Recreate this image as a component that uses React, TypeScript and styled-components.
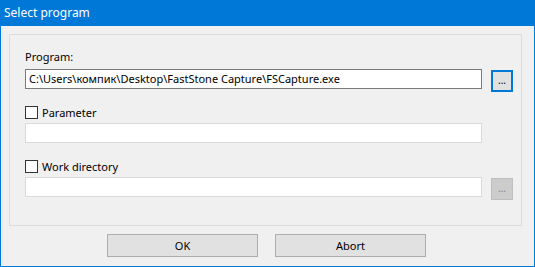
import styled, { createGlobalStyle } from 'styled-components';

const Global = createGlobalStyle`
    html, body {
        margin: 0;
        padding: 0;
        background: #f0f0f0;
    }
    * {
        box-sizing: border-box;
    }
`;

const Window = styled.div`
    display: flex;
    flex-direction: column;
    width: 535px;
    height: 267px;
    font-family: "Noto Sans", "Open Sans", sans-serif;
    font-size: 11px;
    color: #000;
    background: #f0f0f0;
`;

const TitleBar = styled.div`
    display: flex;
    align-items: center;
    height: 26px;
    padding-left: 4px;
    padding-bottom: 1px;
    background: #0078d7;
    color: #fff;
    font-size: 12px;
`;

const Body = styled.div`
    flex: 1;
    display: flex;
    flex-direction: column;
    border: 1px solid #0078d7;
    border-top: none;
    padding: 8px 12px 0 8px;
`;

const Group = styled.div`
    display: flex;
    flex-direction: column;
    height: 192px;
    border: 1px solid #dcdcdc;
    padding: 14px 0 0 15px;
`;

const Label = styled.div`
    height: 16px;
    line-height: 16px;
    margin-bottom: 4px;
`;

const Row = styled.div`
    display: flex;
    align-items: flex-start;
    gap: 9px;
    height: 20px;
`;

const Field = styled.div<{ $active?: boolean }>`
    width: 457px;
    height: 20px;
    background: #fff;
    border: 1px solid ${p => (p.$active ? '#7a7a7a' : '#d9d9d9')};
    padding: 0 3px;
    line-height: 18px;
    white-space: nowrap;
    overflow: hidden;
`;

const Browse = styled.div<{ $disabled?: boolean }>`
    display: flex;
    align-items: center;
    justify-content: center;
    flex-shrink: 0;
    width: 22px;
    height: 22px;
    margin-top: 1px;
    background: ${p => (p.$disabled ? '#cccccc' : '#e1e1e1')};
    border: ${p => (p.$disabled ? '1px solid #bfbfbf' : '2px solid #0078d7')};
    color: ${p => (p.$disabled ? '#838383' : '#000')};
    font-size: 10px;
    line-height: 1;
    padding-bottom: 2px;
`;

const Check = styled.label`
    display: flex;
    align-items: center;
    gap: 4px;
    height: 16px;
    margin-top: 15px;
    margin-bottom: 3px;
`;

const Box = styled.span`
    width: 13px;
    height: 13px;
    border: 1px solid #333;
    background: #fff;
`;

const Buttons = styled.div`
    display: flex;
    justify-content: center;
    gap: 17px;
    padding-top: 8px;
    padding-left: 2px;
`;

const Button = styled.div`
    display: flex;
    align-items: center;
    justify-content: center;
    width: 151px;
    height: 23px;
    background: #e1e1e1;
    border: 1px solid #adadad;
`;

const App = () => {
    return (
        <Window>
            <Global />
            <TitleBar>Select program</TitleBar>
            <Body>
                <Group>
                    <Label>Program:</Label>
                    <Row>
                        <Field $active>C:\Users\компик\Desktop\FastStone Capture\FSCapture.exe</Field>
                        <Browse>...</Browse>
                    </Row>

                    <Check>
                        <Box />
                        Parameter
                    </Check>
                    <Row>
                        <Field />
                    </Row>

                    <Check>
                        <Box />
                        Work directory
                    </Check>
                    <Row>
                        <Field />
                        <Browse $disabled>...</Browse>
                    </Row>
                </Group>
                <Buttons>
                    <Button>OK</Button>
                    <Button>Abort</Button>
                </Buttons>
            </Body>
        </Window>
    );
};

export default App;
